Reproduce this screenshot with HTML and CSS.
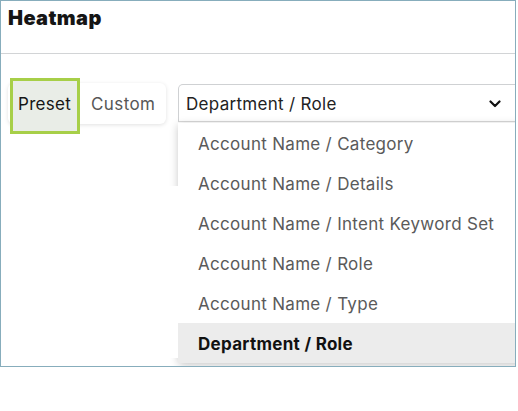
FILE: index.html
```html
<!DOCTYPE html>
<html lang="en">
  <head>
    <meta charset="UTF-8" />
    <meta name="viewport" content="width=device-width, initial-scale=1.0" />
    <title>Heatmap</title>
    <link rel="stylesheet" href="styles.css">
  </head>
  <body>
    <div class="frame">
      <header class="header">
        <h1>Heatmap</h1>
      </header>

      <main class="content">
        <div class="left">
          <div class="segment">
            <button class="seg-btn preset">Preset</button>
            <button class="seg-btn custom">Custom</button>
          </div>
          <div class="panel"></div>
        </div>

        <div class="right">
          <div class="select">
            <span>Department / Role</span>
            <svg class="chevron" width="12" height="8" viewBox="0 0 12 8">
              <path d="M1.5 1.5 L6 6 L10.5 1.5" fill="none" stroke="#111" stroke-width="2.2" stroke-linecap="round" stroke-linejoin="round" />
            </svg>
            <ul class="menu">
              <li>Account Name / Category</li>
              <li>Account Name / Details</li>
              <li>Account Name / Intent Keyword Set</li>
              <li>Account Name / Role</li>
              <li>Account Name / Type</li>
              <li class="selected">Department / Role</li>
            </ul>
          </div>
        </div>
      </main>
    </div>
  </body>
</html>
```

FILE: styles.css
```css
html,
body {
  margin: 0;
  padding: 0;
  background: #fff;
  font-family: Inter, "Noto Sans", sans-serif;
}

.frame {
  width: 514px;
  height: 365px;
  border: 1px solid #87adbc;
  overflow: hidden;
}

.header {
  height: 52px;
  border-bottom: 1px solid #d2d4d6;
  padding: 0 7px;
}

.header h1 {
  margin: 0;
  padding-top: 6px;
  font-size: 20px;
  line-height: 23px;
  font-weight: 900;
  letter-spacing: 0.4px;
  color: #151515;
}

.content {
  display: flex;
  padding: 29px 0 0 7px;
}

.left {
  width: 170px;
  flex: none;
}

.segment {
  display: flex;
  width: 158px;
  height: 41px;
  box-sizing: border-box;
  padding-left: 2px;
  background: #fff;
  border-radius: 6px;
  box-shadow: 0 1px 4px rgba(0, 0, 0, 0.12);
}

.seg-btn {
  border: 0;
  background: none;
  font-family: inherit;
  font-size: 17px;
  letter-spacing: 0.3px;
  padding: 0;
  cursor: pointer;
}

.preset {
  align-self: flex-start;
  width: 70px;
  height: 56px;
  margin-top: -5px;
  box-sizing: border-box;
  border: 3px solid #a7cf48;
  background: #e9ede7;
  color: #161616;
  text-align: left;
  padding: 0 0 5px 5px;
}

.custom {
  color: #575757;
  padding-left: 11px;
  letter-spacing: 0.4px;
}

.panel {
  position: relative;
  z-index: 2;
  height: 172px;
  margin-top: 62px;
  background: #fff;
}

.right {
  flex: 1;
  padding-top: 1px;
}

.select {
  position: relative;
  width: 350px;
  height: 38px;
  box-sizing: border-box;
  border: 1px solid #cfd1d3;
  border-bottom-color: #d8d8d8;
  border-radius: 5px 5px 0 0;
  display: flex;
  align-items: center;
  justify-content: space-between;
  padding: 1px 26px 0 7px;
  font-size: 17px;
  letter-spacing: 0.3px;
  color: #222;
}

.chevron {
  display: block;
}

.menu {
  position: absolute;
  z-index: 1;
  top: 38px;
  left: -1px;
  width: 350px;
  margin: 0;
  padding: 0;
  list-style: none;
  background: #fff;
  border-radius: 0 0 5px 5px;
  box-shadow: 0 2px 8px rgba(0, 0, 0, 0.22);
}

.menu li {
  box-sizing: border-box;
  height: 40px;
  line-height: 38px;
  padding-top: 2px;
  padding-left: 20px;
  font-size: 17px;
  letter-spacing: 0.3px;
  color: #5a5a5a;
}

.menu li.selected {
  background: #ececec;
  color: #111;
  font-weight: 700;
}
```
